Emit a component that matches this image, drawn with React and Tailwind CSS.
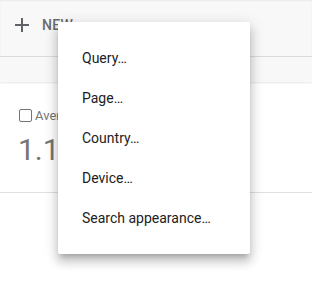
import React from "react";

const items = ["Query…", "Page…", "Country…", "Device…", "Search appearance…"];

function PlusIcon() {
  return (
    <svg width="14" height="14" viewBox="0 0 14 14" fill="none">
      <path d="M7 0v14M0 7h14" stroke="#5f6368" strokeWidth="2" />
    </svg>
  );
}

export default function App() {
  return (
    <div className="relative w-[312px] h-[286px] overflow-hidden bg-white font-['Roboto',sans-serif]">
      {/* toolbar */}
      <div className="h-[57px] flex items-center pl-[15px] pb-[6px] bg-[#f8f8f8] shadow-[inset_0_1px_2px_rgba(0,0,0,0.06)] border-b border-[#dcdcdc]">
        <PlusIcon />
        <span className="ml-[13px] text-[14px] font-medium tracking-[0.3px] text-[#6b6b6b]">NEW</span>
      </div>
      <div className="h-[25px] bg-[#f8f8f8] shadow-[0_1px_2px_rgba(0,0,0,0.1)]" />

      {/* metric card */}
      <div className="pl-[19px] pt-[27px] pb-[24px] border-b border-[#e0e0e0]">
        <div className="flex items-center gap-[3px]">
          <div className="w-[13px] h-[13px] border border-[#757575] rounded-[2px]" />
          <span className="text-[13px] text-[#757575] leading-[13px]">Average position</span>
        </div>
        <div className="mt-[10px] -ml-[1px] text-[30px] leading-[36px] text-[#757575]">1.1</div>
      </div>

      {/* dropdown menu */}
      <div className="absolute left-[58px] top-[22px] w-[192px] py-4 bg-white rounded-[2px] shadow-[0_5px_5px_-3px_rgba(0,0,0,0.2),0_8px_10px_1px_rgba(0,0,0,0.14),0_3px_14px_2px_rgba(0,0,0,0.12)]">
        {items.map((item) => (
          <div key={item} className="h-10 flex items-center pl-6 text-[14px] text-[#212121]">
            {item}
          </div>
        ))}
      </div>
    </div>
  );
}
